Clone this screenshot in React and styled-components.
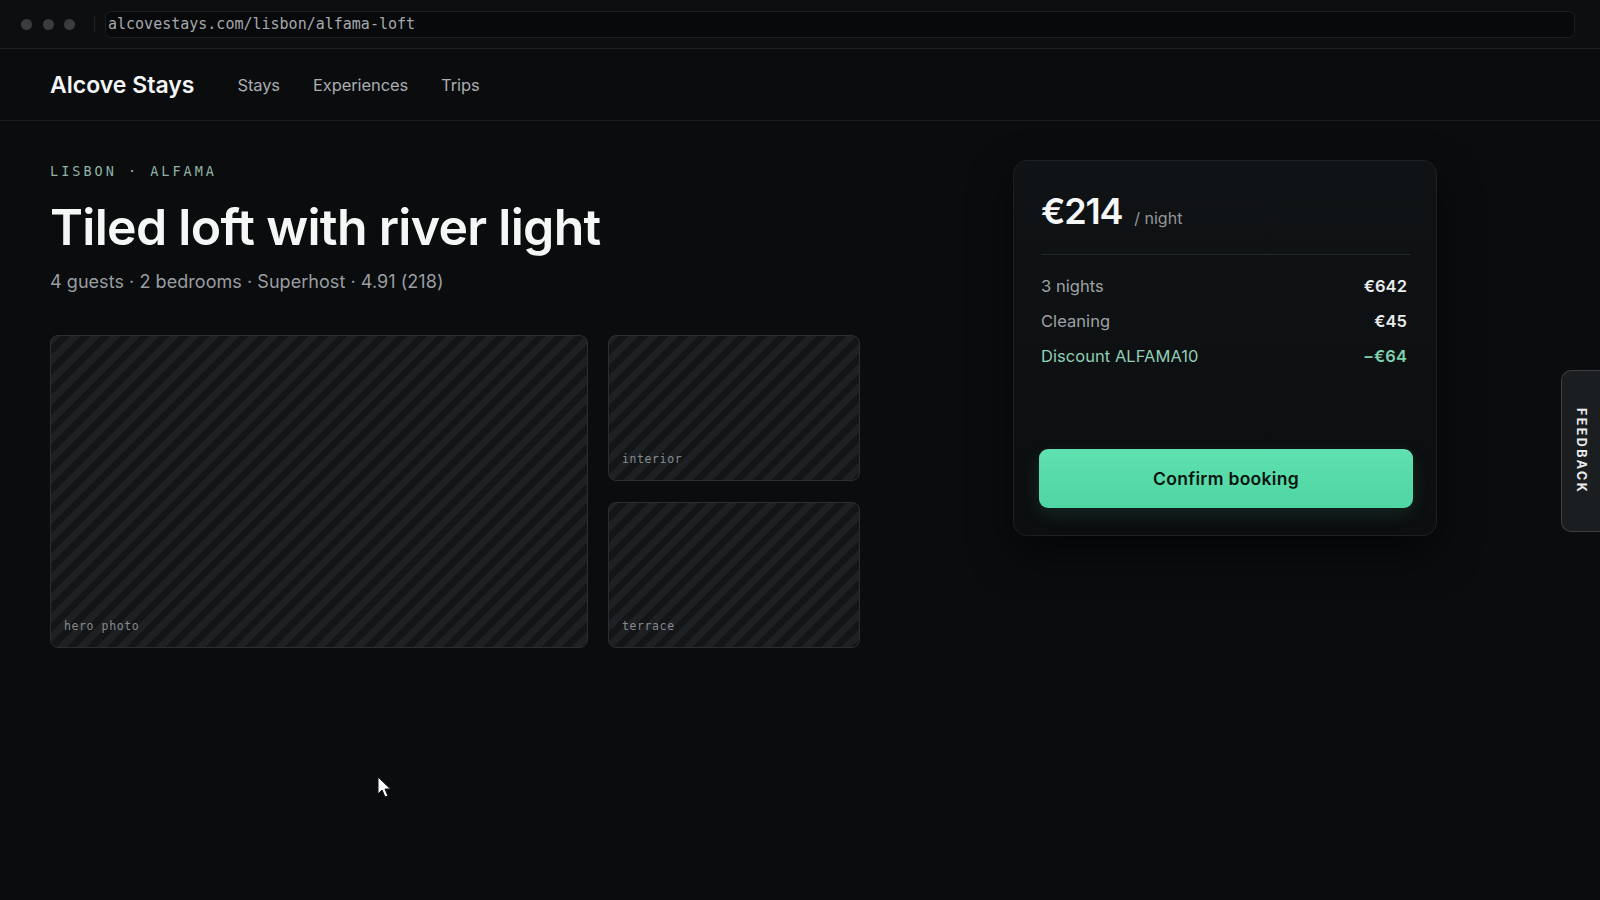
import React from "react";
import styled, { createGlobalStyle } from "styled-components";

const GlobalStyle = createGlobalStyle`
  html, body {
    margin: 0;
    padding: 0;
    background: #0a0c0e;
    color: #f2f3f3;
    font-family: Inter, "Noto Sans", sans-serif;
    -webkit-font-smoothing: antialiased;
  }
  * { box-sizing: border-box; }
`;

const Page = styled.div`
  position: relative;
  width: 1600px;
  height: 900px;
  overflow: hidden;
  background: #0a0c0e;
`;

/* ---- browser chrome ---- */
const Chrome = styled.div`
  height: 49px;
  display: flex;
  align-items: center;
  gap: 10.5px;
  padding: 0 20px 0 21px;
  border-bottom: 1px solid #1d2124;
  background: #0c0e10;
`;

const Dot = styled.span`
  width: 11px;
  height: 11px;
  border-radius: 50%;
  background: #3a3d40;
  flex: none;
`;

const Separator = styled.span`
  width: 1px;
  height: 16px;
  background: #1e2225;
  margin-left: 8px;
`;

const UrlField = styled.div`
  flex: 1;
  height: 27px;
  display: flex;
  align-items: center;
  padding-left: 2px;
  border: 1px solid #1b1f22;
  border-radius: 6px;
  background: #08090b;
  font-family: "DejaVu Sans Mono", "Liberation Mono", monospace;
  font-size: 15px;
  color: #a4a8ab;
  margin-right: 5px;
`;

/* ---- site header ---- */
const Header = styled.header`
  height: 72px;
  display: flex;
  align-items: center;
  padding: 0 50px;
  border-bottom: 1px solid #1a1e21;
`;

const Logo = styled.div`
  font-family: Inter, sans-serif;
  font-weight: 600;
  font-size: 23px;
  letter-spacing: 0;
  color: #f4f5f5;
  margin-right: 43px;
`;

const Nav = styled.nav`
  display: flex;
  gap: 33px;
`;

const NavLink = styled.a`
  font-family: Inter, sans-serif;
  font-size: 16.5px;
  color: #a9adb0;
  text-decoration: none;
  letter-spacing: -0.1px;
`;

/* ---- main content ---- */
const Main = styled.main`
  display: grid;
  grid-template-columns: 903px 424px;
  column-gap: 60px;
  padding: 38px 0 0 50px;
`;

const Listing = styled.section`
  display: flex;
  flex-direction: column;
`;

const Eyebrow = styled.div`
  font-family: "DejaVu Sans Mono", "Liberation Mono", monospace;
  font-size: 13.5px;
  letter-spacing: 3px;
  color: #8fb2a6;
  margin-top: 4px;
`;

const Title = styled.h1`
  margin: 19px 0 0;
  font-family: Inter, sans-serif;
  font-weight: 600;
  font-size: 50px;
  letter-spacing: -0.7px;
  line-height: 58px;
  color: #f5f6f6;
`;

const Meta = styled.p`
  margin: 15px 0 0;
  font-family: Inter, sans-serif;
  font-size: 18px;
  letter-spacing: 0.05px;
  line-height: 22px;
  color: #9a9ea1;
`;

const Gallery = styled.div`
  margin-top: 42px;
  width: 810px;
  display: grid;
  grid-template-columns: 538px 252px;
  grid-template-rows: 146px 146px;
  gap: 21px 20px;
`;

const Photo = styled.div`
  grid-row: ${(p) => (p.$tall ? "span 2" : "auto")};
  display: flex;
  align-items: flex-end;
  padding: 0 13px 14px;
  border: 1px solid #2a2e31;
  border-radius: 8px;
  background: repeating-linear-gradient(
    135deg,
    #1e2123 0px,
    #1e2123 7px,
    #131517 7px,
    #131517 14px
  );
  font-family: "DejaVu Sans Mono", "Liberation Mono", monospace;
  font-size: 11.5px;
  letter-spacing: 0.6px;
  color: #868a8d;
`;

/* ---- booking card ---- */
const Card = styled.aside`
  align-self: start;
  margin-top: 1px;
  padding: 28px 25px 27px 27px;
  border: 1px solid #1c2023;
  border-radius: 14px;
  background: linear-gradient(180deg, #101315 0%, #0c0e10 100%);
  box-shadow: 0 18px 40px rgba(0, 0, 0, 0.55);
  display: flex;
  flex-direction: column;
`;

const PriceLine = styled.div`
  display: flex;
  align-items: baseline;
  gap: 12px;
  padding-bottom: 21px;
  border-bottom: 1px solid #22272a;
`;

const Price = styled.span`
  font-family: Inter, sans-serif;
  font-weight: 600;
  font-size: 36px;
  letter-spacing: -1.2px;
  color: #f6f7f7;
`;

const PerNight = styled.span`
  font-family: Inter, sans-serif;
  font-size: 16px;
  color: #93979a;
`;

const Breakdown = styled.div`
  display: flex;
  flex-direction: column;
  gap: 14px;
  margin-top: 21px;
  padding-right: 4px;
`;

const Row = styled.div`
  display: flex;
  justify-content: space-between;
  font-family: Inter, sans-serif;
  font-size: 16.5px;
  line-height: 21px;
  letter-spacing: 0.05px;
  color: ${(p) => (p.$accent ? "#8fcfb4" : "#9ea2a5")};
`;

const Amount = styled.span`
  font-weight: 600;
  color: ${(p) => (p.$accent ? "#7fd1ae" : "#e9ebec")};
`;

const ConfirmButton = styled.button`
  margin-top: 82px;
  margin-left: -2px;
  height: 59px;
  width: 374px;
  border: none;
  border-radius: 9px;
  background: linear-gradient(180deg, #5fe0b0 0%, #4fd6a2 100%);
  box-shadow: 0 6px 18px rgba(79, 214, 162, 0.12);
  font-family: Inter, sans-serif;
  font-weight: 600;
  font-size: 17.5px;
  letter-spacing: 0.3px;
  color: #0a1510;
  cursor: pointer;
`;

/* ---- overlays ---- */
const FeedbackTab = styled.button`
  position: absolute;
  right: -1px;
  top: 370px;
  width: 40px;
  height: 162px;
  padding: 0;
  border: 1px solid #3b3f43;
  border-right: none;
  border-radius: 10px 0 0 10px;
  background: #1b1e21;
  display: flex;
  align-items: center;
  justify-content: center;
  cursor: pointer;
`;

const FeedbackLabel = styled.span`
  writing-mode: vertical-rl;
  font-family: Inter, sans-serif;
  font-weight: 700;
  font-size: 12.5px;
  letter-spacing: 2.4px;
  color: #e8eaeb;
`;

const Pointer = styled.svg`
  position: absolute;
  left: 377px;
  top: 776px;
  width: 16px;
  height: 24px;
  pointer-events: none;
`;

export default function App() {
  const fees = [
    { label: "3 nights", value: "€642" },
    { label: "Cleaning", value: "€45" },
    { label: "Discount ALFAMA10", value: "−€64", accent: true },
  ];

  return (
    <>
      <GlobalStyle />
      <Page>
        <Chrome>
          <Dot />
          <Dot />
          <Dot />
          <Separator />
          <UrlField>alcovestays.com/lisbon/alfama-loft</UrlField>
        </Chrome>

        <Header>
          <Logo>Alcove Stays</Logo>
          <Nav>
            <NavLink href="#">Stays</NavLink>
            <NavLink href="#">Experiences</NavLink>
            <NavLink href="#">Trips</NavLink>
          </Nav>
        </Header>

        <Main>
          <Listing>
            <Eyebrow>LISBON · ALFAMA</Eyebrow>
            <Title>Tiled loft with river light</Title>
            <Meta>4 guests · 2 bedrooms · Superhost · 4.91 (218)</Meta>
            <Gallery>
              <Photo $tall>hero photo</Photo>
              <Photo>interior</Photo>
              <Photo>terrace</Photo>
            </Gallery>
          </Listing>

          <Card>
            <PriceLine>
              <Price>€214</Price>
              <PerNight>/ night</PerNight>
            </PriceLine>
            <Breakdown>
              {fees.map((f) => (
                <Row key={f.label} $accent={f.accent}>
                  <span>{f.label}</span>
                  <Amount $accent={f.accent}>{f.value}</Amount>
                </Row>
              ))}
            </Breakdown>
            <ConfirmButton>Confirm booking</ConfirmButton>
          </Card>
        </Main>

        <FeedbackTab>
          <FeedbackLabel>FEEDBACK</FeedbackLabel>
        </FeedbackTab>

        <Pointer viewBox="0 0 16 24">
          <path
            d="M1 1 L1 18 L5 14 L8 21 L11 20 L8 13 L13.5 13 Z"
            fill="#ffffff"
            stroke="#111"
            strokeWidth="1"
            strokeLinejoin="round"
          />
        </Pointer>
      </Page>
    </>
  );
}
